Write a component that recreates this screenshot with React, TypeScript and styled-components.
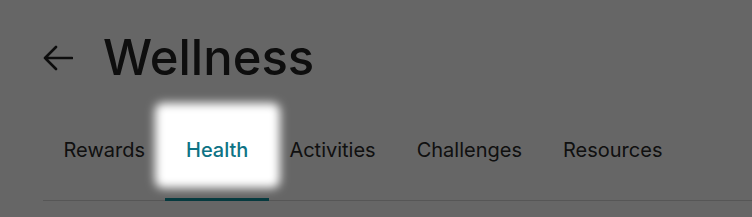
import React, { useState } from 'react';
import styled, { createGlobalStyle } from 'styled-components';

const GlobalStyle = createGlobalStyle`
  html, body {
    margin: 0;
    padding: 0;
    background: #ffffff;
    font-family: Inter, "Noto Sans", "Liberation Sans", sans-serif;
    overflow: hidden;
  }
`;

const Page = styled.div`
  position: relative;
  width: 752px;
  height: 217px;
  padding: 28px 0 0 43px;
  box-sizing: border-box;
`;

const Header = styled.div`
  display: flex;
  align-items: center;
  column-gap: 30px;
`;

const BackButton = styled.button`
  display: flex;
  align-items: center;
  justify-content: center;
  padding: 0;
  border: none;
  background: none;
  color: #222;
  cursor: pointer;
`;

const Title = styled.h1`
  margin: 0;
  font-size: 49px;
  font-weight: 500;
  line-height: 60px;
  color: #242424;
`;

const TabBar = styled.div`
  display: flex;
  margin-top: 22px;
  border-bottom: 1px solid #d6d6d6;
`;

const Tab = styled.button<{ $active?: boolean }>`
  position: relative;
  padding: 28px 20.5px 38px;
  border: none;
  background: none;
  font-family: inherit;
  font-size: 20px;
  font-weight: ${(p) => (p.$active ? 500 : 400)};
  line-height: 24px;
  color: ${(p) => (p.$active ? '#0e7385' : '#2a2a2a')};
  cursor: pointer;

  &::after {
    content: '';
    position: absolute;
    left: 0;
    right: 0;
    bottom: -1px;
    height: 3px;
    background: ${(p) => (p.$active ? '#0f8f9c' : 'transparent')};
  }
`;

// tour spotlight over the active tab, soft edges from the blur
const Spotlight = styled.div`
  position: absolute;
  left: 155px;
  top: 103px;
  width: 125px;
  height: 85px;
  border-radius: 8px;
  pointer-events: none;
  box-shadow: 0 0 0 2000px rgba(0, 0, 0, 0.6);
  filter: blur(5px);
`;

const tabs = ['Rewards', 'Health', 'Activities', 'Challenges', 'Resources'];

const App = () => {
  const [active, setActive] = useState<string>('Health');
  return (
    <>
      <GlobalStyle />
      <Page>
        <Header>
          <BackButton aria-label="Back">
            <svg width="30" height="26" viewBox="0 0 30 26" fill="none">
              <path
                d="M29 13H2M13 2L2 13l11 11"
                stroke="currentColor"
                strokeWidth="2.6"
                strokeLinecap="round"
                strokeLinejoin="round"
              />
            </svg>
          </BackButton>
          <Title>Wellness</Title>
        </Header>
        <TabBar>
          {tabs.map((t) => (
            <Tab key={t} $active={t === active} onClick={() => setActive(t)}>
              {t}
            </Tab>
          ))}
        </TabBar>
        <Spotlight />
      </Page>
    </>
  );
};

export default App;
